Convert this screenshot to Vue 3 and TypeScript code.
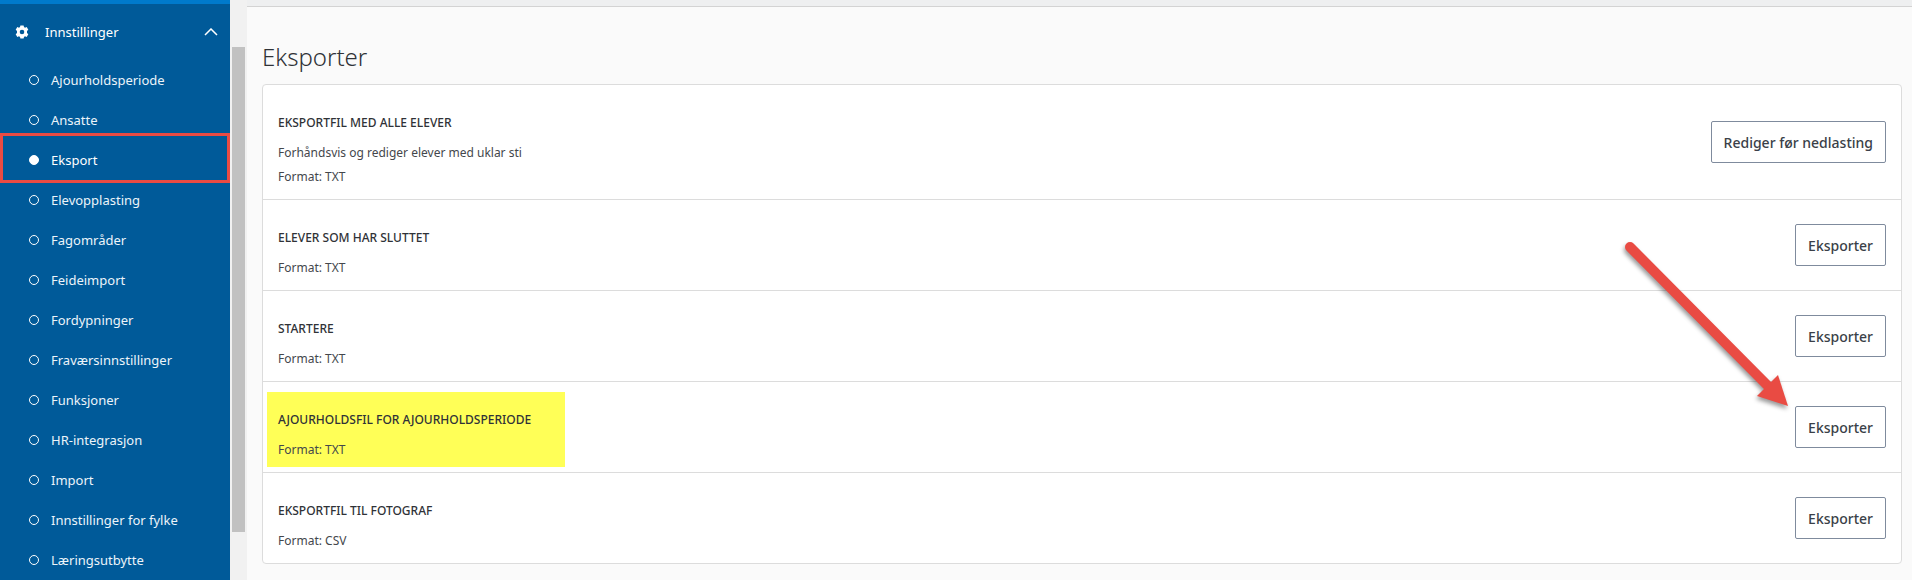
<script setup lang="ts">
interface MenuItem {
  label: string
  active?: boolean
}

interface ExportRow {
  title: string
  lines: string[]
  action: string
  highlighted?: boolean
  pointed?: boolean
}

const menu: MenuItem[] = [
  { label: 'Ajourholdsperiode' },
  { label: 'Ansatte' },
  { label: 'Eksport', active: true },
  { label: 'Elevopplasting' },
  { label: 'Fagområder' },
  { label: 'Feideimport' },
  { label: 'Fordypninger' },
  { label: 'Fraværsinnstillinger' },
  { label: 'Funksjoner' },
  { label: 'HR-integrasjon' },
  { label: 'Import' },
  { label: 'Innstillinger for fylke' },
  { label: 'Læringsutbytte' },
]

const rows: ExportRow[] = [
  {
    title: 'Eksportfil med alle elever',
    lines: ['Forhåndsvis og rediger elever med uklar sti', 'Format: TXT'],
    action: 'Rediger før nedlasting',
  },
  { title: 'Elever som har sluttet', lines: ['Format: TXT'], action: 'Eksporter' },
  { title: 'Startere', lines: ['Format: TXT'], action: 'Eksporter' },
  {
    title: 'Ajourholdsfil for ajourholdsperiode',
    lines: ['Format: TXT'],
    action: 'Eksporter',
    highlighted: true,
    pointed: true,
  },
  { title: 'Eksportfil til fotograf', lines: ['Format: CSV'], action: 'Eksporter' },
]
</script>

<template>
  <div class="page">
    <nav class="sidebar" aria-label="Innstillinger">
      <button class="group" type="button" aria-expanded="true">
        <svg class="gear" viewBox="0 0 14 14" aria-hidden="true">
          <path
            fill-rule="evenodd"
            d="M5.4 0.4h3.2l.4 1.7 1 .6 1.7-.6 1.6 2.7L12 6v2l1.3 1.2-1.6 2.7-1.7-.6-1 .6-.4 1.7H5.400L5 11.900l-1-.6-1.700.6L.7 9.200 2 8V6L.7 4.800l1.600-2.700L4 2.700l1-.6zM7 4.700a2.300 2.300 0 1 0 0 4.600a2.300 2.300 0 1 0 0-4.600z"
          />
        </svg>
        <span class="group-label">Innstillinger</span>
        <svg class="chevron" viewBox="0 0 14 8" aria-hidden="true">
          <path d="M1 7l6-6 6 6" />
        </svg>
      </button>
      <ul class="menu">
        <li v-for="item in menu" :key="item.label">
          <a
            href="#"
            class="item"
            :class="{ active: item.active }"
            :aria-current="item.active ? 'page' : undefined"
          >
            <span class="bullet"></span>{{ item.label }}
          </a>
        </li>
      </ul>
    </nav>

    <div class="scrollbar" aria-hidden="true"><div class="thumb"></div></div>

    <main class="main">
      <div class="topbar"></div>
      <section class="content">
        <h1>Eksporter</h1>
        <div class="card">
          <div v-for="row in rows" :key="row.title" class="row">
            <div class="info" :class="{ highlighted: row.highlighted }">
              <h2>{{ row.title }}</h2>
              <p v-for="line in row.lines" :key="line">{{ line }}</p>
            </div>
            <div class="action">
              <button class="export" type="button">{{ row.action }}</button>
              <svg v-if="row.pointed" class="arrow" viewBox="0 0 174 174" aria-hidden="true">
                <path class="shaft" d="M10 7L148 146" />
                <path class="head" d="M158 135L168 166L137 156z" />
              </svg>
            </div>
          </div>
        </div>
      </section>
    </main>
  </div>
</template>

<style>
body {
  margin: 0;
  background: #fafafa;
}
</style>

<style scoped>
.page {
  display: flex;
  min-height: 100vh;
  font-family: 'Noto Sans', 'Open Sans', sans-serif;
  color: #2f3237;
}

.sidebar {
  flex: 0 0 230px;
  box-sizing: border-box;
  border-top: 4px solid #007acc;
  background: #005a99;
  color: #fff;
}

.group {
  display: flex;
  align-items: center;
  width: 100%;
  height: 56px;
  padding: 0 12px 0 15px;
  border: 0;
  background: none;
  color: inherit;
  font: inherit;
  font-size: 13px;
  text-align: left;
}

.gear {
  width: 14px;
  height: 14px;
  fill: #fff;
}

.group-label {
  flex: 1;
  margin-left: 16px;
}

.chevron {
  width: 14px;
  height: 8px;
  fill: none;
  stroke: #fff;
  stroke-width: 1.5;
}

.menu {
  margin: 0;
  padding: 0;
  list-style: none;
}

.item {
  position: relative;
  display: flex;
  align-items: center;
  height: 40px;
  padding-left: 29px;
  color: #ecf4fa;
  font-size: 13px;
  text-decoration: none;
}

.bullet {
  box-sizing: border-box;
  width: 10px;
  height: 10px;
  margin-right: 12px;
  border: 1px solid #fff;
  border-radius: 50%;
}

.active {
  color: #fff;
}

.active .bullet {
  background: #fff;
}

.active::after {
  content: '';
  position: absolute;
  inset: -7px 0 -3px;
  border: 3px solid #e94b43;
}

.scrollbar {
  flex: 0 0 17px;
  box-sizing: border-box;
  padding: 47px 2px 48px;
  display: flex;
  background: #f1f1f1;
}

.thumb {
  flex: 1;
  background: #c1c1c1;
}

.main {
  flex: 1;
  min-width: 0;
}

.topbar {
  height: 6px;
  border-bottom: 1px solid #d3d3d3;
  background: #eeeff0;
}

.content {
  padding: 32px 10px 16px 15px;
}

h1 {
  margin: 0 0 9px;
  font-size: 24px;
  font-weight: 300;
  line-height: 36px;
}

.card {
  border: 1px solid #dcdcdc;
  border-radius: 4px;
  background: #fff;
}

.row {
  display: flex;
  align-items: center;
  justify-content: space-between;
  padding: 10px 15px 5px 4px;
}

.row + .row {
  border-top: 1px solid #dcdcdc;
}

.info {
  padding: 16px 34px 5px 11px;
}

.highlighted {
  background: #ffff57;
}

h2 {
  margin: 0 0 6px;
  font-size: 12px;
  font-weight: 500;
  line-height: 24px;
  text-transform: uppercase;
}

p {
  margin: 0;
  color: #44474c;
  font-size: 12px;
  font-weight: 400;
  line-height: 24px;
}

.action {
  position: relative;
  margin: -10px 0 -5px;
}

.export {
  display: block;
  height: 42px;
  padding: 0 12px;
  border: 1px solid #7f8b9d;
  border-radius: 2px;
  background: #fff;
  color: #3a3f48;
  font: inherit;
  font-size: 14px;
  font-weight: 500;
}

.arrow {
  position: absolute;
  right: 92px;
  bottom: 34px;
  width: 174px;
  height: 174px;
  overflow: visible;
  filter: drop-shadow(-1px 3px 2px rgba(0, 0, 0, 0.4));
  pointer-events: none;
}

.shaft {
  fill: none;
  stroke: #e94b43;
  stroke-width: 10;
  stroke-linecap: round;
}

.head {
  fill: #e94b43;
}
</style>
